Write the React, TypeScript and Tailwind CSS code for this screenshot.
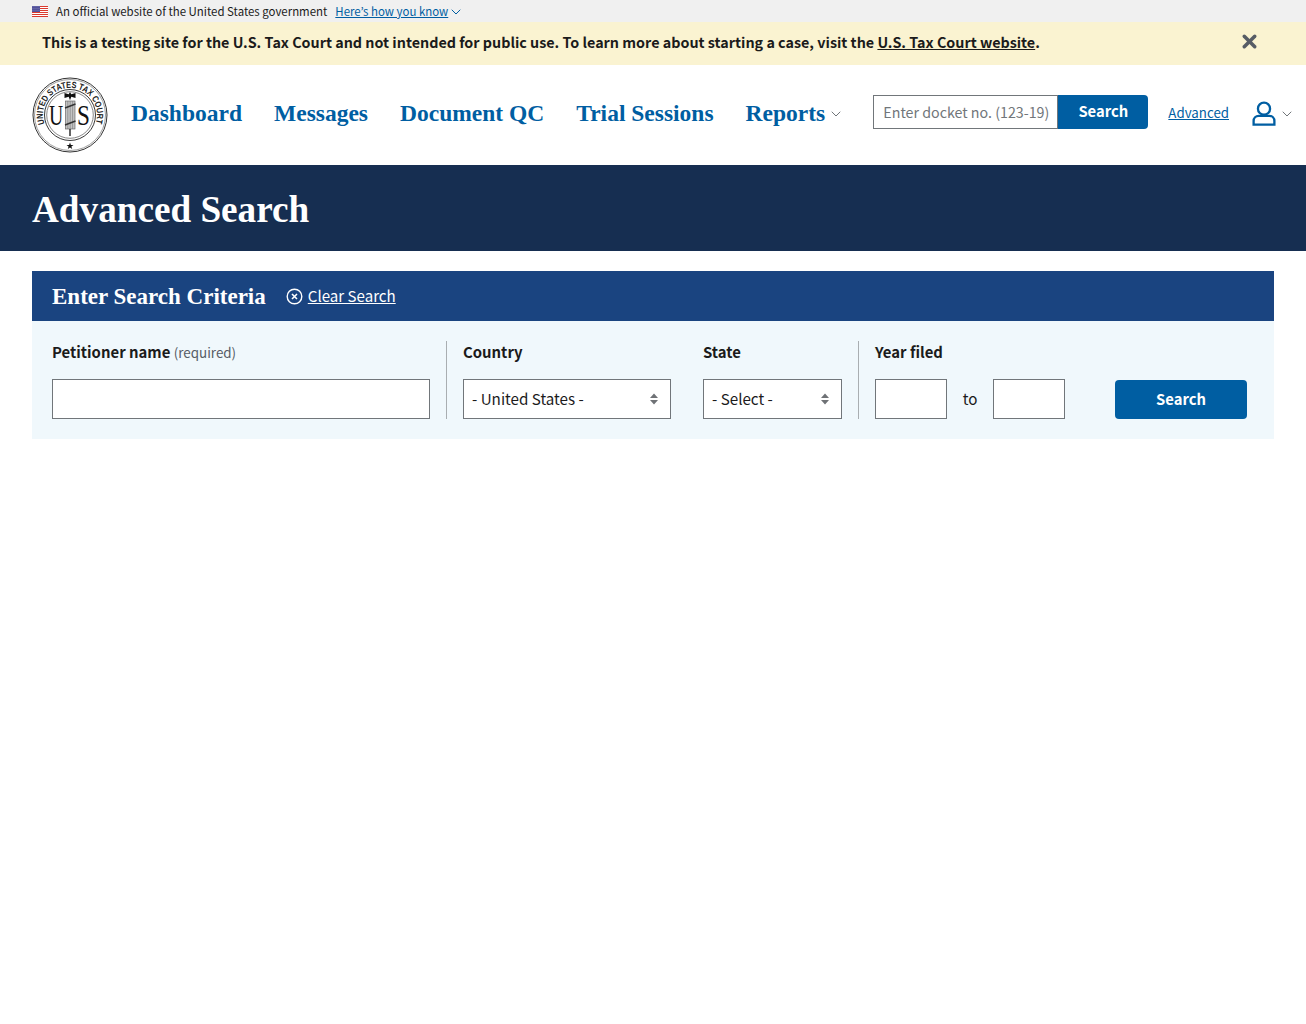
import { ChevronDown, X } from "lucide-react";

const sans = "font-['Noto_Sans_CJK_JP','Liberation_Sans',sans-serif]";
const serif = "font-['Liberation_Serif',serif]";

function Flag() {
  return (
    <svg width="16" height="11" viewBox="0 0 16 11" className="shrink-0">
      <rect width="16" height="11" fill="#fff" />
      {[0, 2, 4, 6, 8, 10].map((y) => (
        <rect key={y} y={y} width="16" height="1" fill="#db3a2e" />
      ))}
      <rect width="8" height="6" fill="#3c3b8e" />
      {[1, 3, 5, 7].map((x) =>
        [1, 3, 5].map((y) => <rect key={`${x}-${y}`} x={x - 0.4} y={y - 0.5} width="0.8" height="0.8" fill="#fff" />)
      )}
    </svg>
  );
}

function Seal() {
  return (
    <svg width="76" height="76" viewBox="0 0 76 76" className="shrink-0">
      <defs>
        <path id="sealArc" d="M 12.500 46.800 A 27 27 0 1 1 63.500 46.800" />
      </defs>
      <circle cx="38" cy="38" r="37" fill="#fff" stroke="#333" strokeWidth="1" />
      <circle cx="38" cy="38" r="35.500" fill="none" stroke="#777" strokeWidth="0.7" />
      <circle cx="38" cy="38" r="25.500" fill="none" stroke="#222" strokeWidth="0.9" />
      <circle cx="38" cy="38" r="23.300" fill="none" stroke="#555" strokeWidth="0.7" />
      <text fontSize="9" fontWeight="700" fill="#222" fontFamily="Liberation Sans, sans-serif">
        <textPath href="#sealArc" textLength="102" lengthAdjust="spacingAndGlyphs">
          UNITED STATES TAX COURT
        </textPath>
      </text>
      <text transform="translate(24 48) scale(0.68 1)" fontSize="29" fill="#111" fontFamily="Liberation Serif, serif" textAnchor="middle">U</text>
      <text transform="translate(51.500 48) scale(0.8 1)" fontSize="29" fill="#111" fontFamily="Liberation Serif, serif" textAnchor="middle">S</text>
      <rect x="33.500" y="24" width="9.500" height="28" fill="#c4c4c4" stroke="#555" strokeWidth="0.6" />
      <path d="M35.800 24v28M38.200 24v28M40.600 24v28" stroke="#777" strokeWidth="0.6" />
      <path d="M33 31l10.500-4M33 48l10.500-4" stroke="#333" strokeWidth="1.400" />
      <path d="M38 15l1.300 2.200 4.200-1.200v5l-4.200-1.200-1.300 3.500-1.300-3.500-4.200 1.200v-5l4.200 1.200z" fill="#111" />
      <path d="M38 52v7" stroke="#222" strokeWidth="1.400" />
      <path d="M38 65.500l.9 2.400h2.600l-2.100 1.600.8 2.500-2.200-1.500-2.200 1.500.8-2.500-2.100-1.600h2.600z" fill="#111" />
    </svg>
  );
}

function UpDown() {
  return (
    <svg width="8" height="12" viewBox="0 0 8 12" className="shrink-0">
      <path d="M4 0.500L8 5H0zM4 11.500L0 7h8z" fill="#6f7276" />
    </svg>
  );
}

function UserIcon() {
  return (
    <svg width="24" height="25" viewBox="0 0 24 26" fill="none" stroke="#005ea2" strokeWidth="2.400">
      <circle cx="12" cy="8" r="6.300" />
      <path d="M6.500 15.500H17.500C20.500 15.500 22.800 17.800 22.800 20.800V24.500H1.200V20.800C1.200 17.800 3.500 15.500 6.500 15.500Z" />
    </svg>
  );
}

function FieldLabel({ children }: { children: React.ReactNode }) {
  return <div className="h-[22px] text-[14.900px] font-semibold leading-[22px] text-[#1b1b1b]">{children}</div>;
}

export default function App() {
  return (
    <div className={`min-h-[1024px] bg-white text-[#1b1b1b] ${sans}`}>
      {/* gov banner */}
      <div className="flex h-[22px] items-center bg-[#f0f0f0] pl-8 pt-px text-[11.450px]">
        <Flag />
        <span className="ml-2">An official website of the United States government</span>
        <a className="ml-2 text-[#005ea2] underline">Here’s how you know</a>
        <ChevronDown className="text-[#005ea2]" size={16} strokeWidth={1.500} />
      </div>

      {/* testing alert */}
      <div className="flex h-[43px] items-center justify-between bg-[#faf3d1] pb-[3px] pl-[42px] pr-[46px] text-[14.330px] font-bold text-[#1b1b1b]">
        <span>
          This is a testing site for the U.S. Tax Court and not intended for public use. To learn more about starting a
          case, visit the <a className="underline">U.S. Tax Court website</a>.
        </span>
        <X className="mb-px text-[#565c65]" size={21} strokeWidth={4} />
      </div>

      {/* header */}
      <header className="flex h-[100px] items-center pl-8 pr-[11px]">
        <Seal />
        <nav className={`mb-[2px] ml-[23px] flex items-center gap-8 text-[23.500px] font-bold text-[#005ea2] ${serif}`}>
          <a>Dashboard</a>
          <a>Messages</a>
          <a>Document QC</a>
          <a>Trial Sessions</a>
          <a className="flex items-center gap-[3px]">
            Reports
            <ChevronDown className="text-[#71767a]" size={16} strokeWidth={1.500} />
          </a>
        </nav>
        <div className="mb-[7px] ml-auto flex h-[34px] items-center">
          <div className="flex h-full w-[185px] items-center whitespace-nowrap border border-[#71767a] bg-white pl-[9px] text-[14.250px] text-[#71767a]">
            Enter docket no. (123-19)
          </div>
          <button className="h-full w-[90px] rounded-r bg-[#005ea2] text-[14.800px] font-bold text-white">Search</button>
        </div>
        <a className="mb-[5px] ml-5 text-[13.300px] text-[#005ea2] underline">Advanced</a>
        <div className="mb-[3px] ml-[23px] flex items-center gap-[3px]">
          <UserIcon />
          <ChevronDown className="text-[#71767a]" size={16} strokeWidth={1.500} />
        </div>
      </header>

      {/* hero */}
      <div className="flex h-[86px] items-center bg-[#162e51] pl-8">
        <h1 className={`mt-[3px] text-[37.200px] font-bold text-white ${serif}`}>Advanced Search</h1>
      </div>

      {/* search form */}
      <main className="mx-8 mt-5">
        <div className="flex h-[50px] items-center bg-[#1a4480] pl-5 text-white">
          <h2 className={`mt-[2px] text-[23px] font-bold ${serif}`}>Enter Search Criteria</h2>
          <svg width="17" height="17" viewBox="0 0 17 17" fill="none" stroke="#fff" strokeWidth="1.400" className="ml-5">
            <circle cx="8.500" cy="8.500" r="7.300" />
            <path d="M6 6l5 5M11 6l-5 5" strokeWidth="1.600" />
          </svg>
          <a className="mb-[2px] ml-[5px] text-[15.100px] underline">Clear Search</a>
        </div>
        <div className="flex h-[118px] items-start bg-[#f0f8fc] pl-5 pt-5">
          <div className="h-[78px] w-[395px] shrink-0 border-r border-[#a9aeb1] pr-4">
            <FieldLabel>
              Petitioner name <span className="text-[13.400px] font-normal text-[#565c65]">(required)</span>
            </FieldLabel>
            <div className="mt-4 h-10 w-[378px] border border-[#71767a] bg-white" />
          </div>
          <div className="w-[256px] shrink-0 pl-4">
            <FieldLabel>Country</FieldLabel>
            <div className="mt-4 flex h-10 w-[208px] items-center justify-between border border-[#71767a] bg-white pb-px pl-2 pr-3 text-[15.200px]">
              - United States -
              <UpDown />
            </div>
          </div>
          <div className="h-[78px] w-[156px] shrink-0 border-r border-[#a9aeb1]">
            <FieldLabel>State</FieldLabel>
            <div className="mt-4 flex h-10 w-[139px] items-center justify-between border border-[#71767a] bg-white pb-px pl-2 pr-3 text-[15.200px]">
              - Select -
              <UpDown />
            </div>
          </div>
          <div className="pl-4">
            <FieldLabel>Year filed</FieldLabel>
            <div className="mt-4 flex h-10 items-center">
              <div className="h-10 w-[72px] border border-[#71767a] bg-white" />
              <span className="mb-px w-[46px] text-center text-[15.200px]">to</span>
              <div className="h-10 w-[72px] border border-[#71767a] bg-white" />
              <button className="ml-[50px] mt-px h-[39px] w-[132px] rounded bg-[#005ea2] text-[14.800px] font-bold text-white">
                Search
              </button>
            </div>
          </div>
        </div>
      </main>
    </div>
  );
}
